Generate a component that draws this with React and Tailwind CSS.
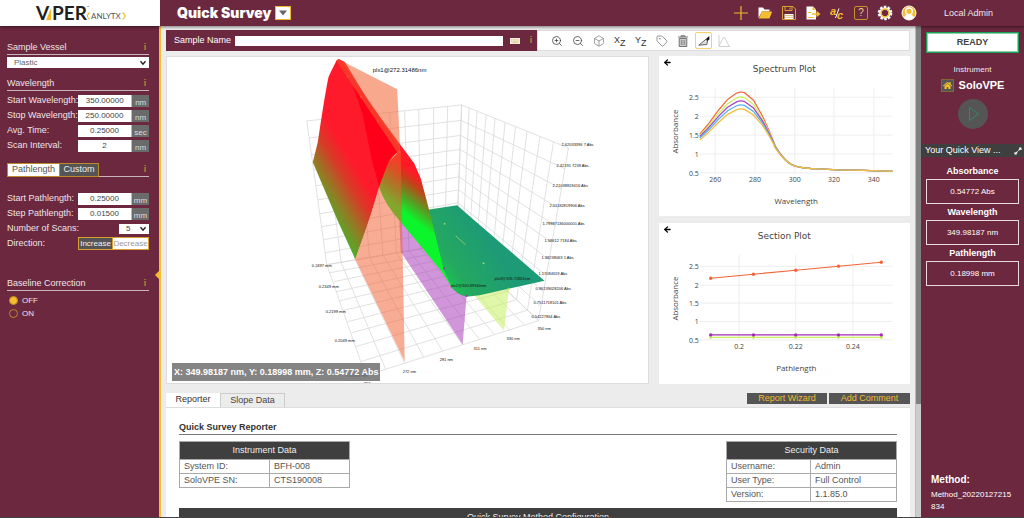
import React from "react";
import { FaHome, FaExpandAlt } from "react-icons/fa";
import { ZoomIn, ZoomOut, Box, Tag, ArrowLeft } from "lucide-react";

/* ---------- shared helpers ---------- */

const Info = () => (
  <button type="button" aria-label="Info" className="w-2 text-center text-[9px] leading-none font-bold text-[#b98a2c]">
    i
  </button>
);

function Section({ title, children }) {
  return (
    <div className="flex h-3.5 items-center justify-between border-b border-[#c9b3bd]">
      {title ? <h2 className="text-[9px] leading-none">{title}</h2> : children}
      <Info />
    </div>
  );
}

function Field({ id, label, value, unit }) {
  return (
    <div className="flex h-[15px] items-center justify-between">
      <label htmlFor={id} className="text-[9px] leading-none whitespace-nowrap">{label}</label>
      <div className="flex h-3 w-[71px] shrink-0">
        <input id={id} defaultValue={value} className="h-3 w-[54px] border-r border-[#f0b92d] bg-white text-center text-[8px] leading-none text-[#444]" />
        <span className="flex flex-1 items-end justify-center bg-[#6b6b6b] text-[8px] leading-[9px] text-[#ddd]">{unit}</span>
      </div>
    </div>
  );
}

const Chevron = () => (
  <svg viewBox="0 0 8 6" className="pointer-events-none absolute top-1/2 right-0.5 h-1.5 w-2 -translate-y-1/2">
    <path d="M1.5 1.2 4 4.2 6.5 1.2" fill="none" stroke="#222" strokeWidth="1.4" />
  </svg>
);

/* ---------- header ---------- */

const Logo = () => (
  <svg viewBox="0 0 160 26" className="h-[26px] w-40" role="img" aria-label="ViPER ANLYTX">
    <g fontFamily="Lato, sans-serif" fontWeight="700" fontSize="19" fill="#1f1f1f">
      <text x="36" y="20">V</text>
      <text x="52" y="20">PER</text>
    </g>
    <path d="M51.500 6V20.500H45.500Z" fill="#f5b921" stroke="#fff" strokeWidth=".7" />
    <text x="87" y="7.500" fontSize="3" fontFamily="Lato, sans-serif" fill="#333">™</text>
    <text x="91" y="18.500" fontSize="8" fontFamily="Lato, sans-serif" fill="#555">ANLYTX</text>
    <path d="M89.500 12.500Q87.500 14.500 87.300 16 87.500 17.500 89.500 19.500M122.500 12.500Q125 14.500 125.200 16 125 17.500 122.500 19.500" fill="none" stroke="#f5b921" strokeWidth="1.200" />
  </svg>
);

const SaveIcon = () => (
  <svg viewBox="0 0 16 16" className="h-4 w-4">
    <path d="M1.500 1.500H12L14.500 4V14.500H1.500Z" fill="none" stroke="#d9a030" />
    <path d="M4 1.500V5.500H11V1.500M9 2.500V4.500" fill="none" stroke="#d9a030" />
    <path d="M3.500 9H12.500V14H3.500Z" fill="#fff" />
    <path d="M4 10.500H12M4 12.300H12" stroke="#c98f2a" strokeWidth=".6" />
  </svg>
);

const GearIcon = () => (
  <svg viewBox="0 0 16 16" className="h-4 w-4">
    <circle cx="8" cy="8" r="6" fill="none" stroke="#fff" strokeWidth="2.600" strokeDasharray="2.400 1.370" />
    <circle cx="8" cy="8" r="4.500" fill="#6c283f" stroke="#fff" strokeWidth="2.600" />
    <circle cx="8" cy="8" r="3.900" fill="none" stroke="#f0b92d" strokeWidth="1.500" />
  </svg>
);

const UserIcon = () => (
  <svg viewBox="0 0 16 16" className="h-4 w-4">
    <circle cx="8" cy="8" r="7" fill="#f5be2e" stroke="#fff" strokeWidth="1" />
    <path d="M3 12.800Q4 9.600 8 9.600T13 12.800Q8 16.500 3 12.800Z" fill="#fff" />
    <circle cx="8" cy="6.300" r="3.300" fill="#f5be2e" stroke="#fff" strokeWidth="1.400" />
  </svg>
);

const QualityIcon = () => (
  <svg viewBox="0 0 16 16" className="h-4 w-4 font-[Liberation_Sans]" fontSize="11" fontWeight="700" fontStyle="italic" fill="#f5be2e">
    <text x="1" y="10">a</text>
    <path d="M10 3.500 6.500 13" stroke="#fff" strokeWidth="1" />
    <text x="8" y="14">c</text>
  </svg>
);

function Header() {
  const items = [
    ["New", <svg viewBox="0 0 16 16" className="h-4 w-4"><path d="M8 1V15M1 8H15" stroke="#f0b92d" strokeWidth="1.200" /></svg>],
    ["Open", (
      <svg viewBox="0 0 16 16" className="h-4 w-4">
        <path d="M1.500 13V2.500H6L7.500 4.500H12.500V6.500H5Z" fill="#fff" />
        <path d="M1.800 13.500 4.800 6.500H15.200L12.500 13.500Z" fill="#f5be2e" />
      </svg>
    )],
    ["Save", <SaveIcon />],
    ["Export", (
      <svg viewBox="0 0 16 16" className="h-4 w-4">
        <path d="M1.500 1.500H8L11 4.500V14.500H1.500Z" fill="#fff" />
        <path d="M7.500 1.500V5H11Z" fill="#f5be2e" />
        <path d="M3 7.500H6.500M3 12.500H9" stroke="#f5be2e" />
        <path d="M7 8.200H11.500V5.800L15.500 9 11.500 12.200V9.800H7Z" fill="#f5be2e" />
      </svg>
    )],
    ["Quality", <QualityIcon />],
    ["Help", <span className="flex h-3.5 w-3.5 items-center justify-center rounded-xs border border-[#c98f2a] text-[10px] leading-none text-[#f3cf85]">?</span>],
    ["Settings", <GearIcon />],
    ["User", <UserIcon />],
  ];
  return (
    <header className="relative z-10 flex h-[26px] shrink-0 bg-[#6c283f] text-white shadow-[0_1px_3px_rgba(0,0,0,.5)]">
      <div className="w-40 shrink-0 bg-white"><Logo /></div>
      <div className="flex flex-1 items-center justify-between pr-1 pl-[17px]">
        <div className="flex items-center gap-1">
          <h1 className="font-[Inter,sans-serif] text-[14px] leading-none font-black">Quick Survey</h1>
          <button type="button" aria-label="Choose application" className="flex h-3.5 w-4 items-center justify-center border border-[#f0b92d] bg-white">
            <svg viewBox="0 0 10 8" className="h-2 w-2.5"><path d="M1 1.500H9L5 6.500Z" fill="#666" /></svg>
          </button>
        </div>
        <div className="flex gap-2">
          {items.map(([name, icon]) => (
            <button key={name} type="button" aria-label={name} className="flex h-4 w-4 items-center justify-center">{icon}</button>
          ))}
        </div>
      </div>
      <div className="flex w-[103px] shrink-0 items-center justify-center text-[9px] leading-none text-[#f0e6ea]">
        <span className="pr-2">Local Admin</span>
      </div>
    </header>
  );
}

/* ---------- left sidebar ---------- */

function Sidebar() {
  return (
    <aside className="relative w-[161px] shrink-0 border-r-2 border-[#f5be2e] bg-[#6c283f] pt-[15px] pr-2.5 pl-[7px] text-[#eee4e8]">
      <Section title="Sample Vessel" />
      <div className="relative mt-0.5">
        <select aria-label="Sample Vessel" className="block h-[11px] w-full appearance-none bg-white pl-[7px] text-[8px] leading-[11px] text-[#666]">
          <option>Plastic</option>
        </select>
        <Chevron />
      </div>
      <div className="mt-[9px]"><Section title="Wavelength" /></div>
      <div className="mt-0.5">
        <Field id="startWl" label="Start Wavelength:" value="350.00000" unit="nm" />
        <Field id="stopWl" label="Stop Wavelength:" value="250.00000" unit="nm" />
        <Field id="avgTime" label="Avg. Time:" value="0.25000" unit="sec" />
        <Field id="scanInt" label="Scan Interval:" value="2" unit="nm" />
      </div>
      <div className="mt-2.5">
        <Section>
          <div className="flex h-3.5 border border-[#b98a2c] text-[9px] leading-none">
            <button type="button" className="w-[51px] bg-white text-[#555]">Pathlength</button>
            <button type="button" className="w-[39px] border-l border-[#b98a2c] bg-[#555] text-[#eee]">Custom</button>
          </div>
        </Section>
      </div>
      <div className="mt-3.5">
        <Field id="startPl" label="Start Pathlength:" value="0.25000" unit="mm" />
        <Field id="stepPl" label="Step Pathlength:" value="0.01500" unit="mm" />
        <div className="flex h-[15px] items-center justify-between">
          <label htmlFor="scans" className="text-[9px] leading-none">Number of Scans:</label>
          <div className="relative">
            <select id="scans" className="block h-2.5 w-[30px] appearance-none bg-white pl-[7px] text-[8px] leading-[10px] text-[#444]">
              <option>5</option>
            </select>
            <Chevron />
          </div>
        </div>
        <div className="flex h-[15px] items-center justify-between">
          <span className="text-[9px] leading-none">Direction:</span>
          <div className="flex h-[13px] w-[71px] border border-[#d9a030] text-[8px] leading-none">
            <button type="button" className="w-[34px] border-r border-[#d9a030] bg-[#555] text-[#f3f3f3]">Increase</button>
            <button type="button" className="flex-1 bg-white text-[#999]">Decrease</button>
          </div>
        </div>
      </div>
      <div className="mt-[26px]"><Section title="Baseline Correction" /></div>
      <fieldset className="mt-[3px] text-[8px] leading-none">
        {["OFF", "ON"].map((name) => (
          <label key={name} className="flex h-[13px] items-center gap-1 pl-0.5">
            <input
              type="radio"
              name="baseline"
              defaultChecked={name === "OFF"}
              className="h-[9px] w-[9px] appearance-none rounded-full border border-[#b98a2c] checked:bg-[#f5be2e]"
            />
            {name}
          </label>
        ))}
      </fieldset>
      <svg viewBox="0 0 4 8" className="absolute top-[245px] right-0 h-2 w-1"><path d="M4 0V8L0 4Z" fill="#f5be2e" /></svg>
    </aside>
  );
}

/* ---------- toolbar ---------- */

function Toolbar() {
  const plane = (a) => (
    <svg viewBox="0 0 14 14" className="h-3.5 w-3.5 font-[Liberation_Sans]" fill="#333">
      <text x="1" y="9" fontSize="9">{a}</text>
      <text x="7" y="12" fontSize="9">Z</text>
    </svg>
  );
  const tools = [
    ["Zoom in", <ZoomIn size={12} color="#444" strokeWidth={1.6} />],
    ["Zoom out", <ZoomOut size={12} color="#444" strokeWidth={1.6} />],
    ["3D view", <Box size={12} color="#888" strokeWidth={1.6} />],
    ["XZ view", plane("X")],
    ["YZ view", plane("Y")],
    ["Labels", <Tag size={12} color="#888" strokeWidth={1.8} />],
    ["Delete", (
      <svg viewBox="0 0 12 12" className="h-3 w-3">
        <path d="M1 2H11M4 2V.8H8V2M2.200 3.500H9.800V11.500H2.200Z" fill="#ccc" stroke="#666" strokeWidth=".9" />
        <path d="M4.300 5V10M6 5V10M7.700 5V10" stroke="#777" strokeWidth=".7" />
      </svg>
    )],
    ["Slice", (
      <svg viewBox="0 0 12 12" className="h-3 w-3">
        <path d="M.8 10.200 8 4.200 9.500 6 8.800 9.500Z" fill="#ddd" stroke="#555" strokeWidth=".9" />
        <path d="M8 4 11.200 1 11.500 4.200 9.500 6Z" fill="#111" />
      </svg>
    )],
    ["Peaks", (
      <svg viewBox="0 0 12 12" className="h-3 w-3">
        <path d="M1 0V11.500H12M1 11 5 3Q6 2 7 3L11 11" fill="none" stroke="#ccc" strokeWidth=".9" />
      </svg>
    )],
  ];
  return (
    <div className="flex h-[21px] shrink-0">
      <div className="flex flex-1 items-center bg-[#6c283f] pr-0.5 pl-2">
        <label htmlFor="sample" className="w-[61px] text-[9px] leading-none whitespace-nowrap text-white">Sample Name</label>
        <input id="sample" className="h-2.5 min-w-0 flex-1 bg-white px-1 text-[8px]" />
        <svg viewBox="0 0 10 6" className="mx-[7px] h-1.5 w-2.5">
          <path d="M0 0H10V6H0Z" fill="#f4efe0" />
          <path d="M1 1.700H9M1 3.200H9" stroke="#d5b66a" strokeWidth=".8" strokeDasharray="1 .6" />
          <path d="M2.500 4.700H7.500" stroke="#d5b66a" strokeWidth=".7" />
        </svg>
        <Info />
      </div>
      <div className="flex flex-1 items-center gap-[3px] border border-[#ddd] bg-white pl-2.5">
        {tools.map(([name, icon]) => (
          <button
            key={name}
            type="button"
            aria-label={name}
            className={
              name === "Slice"
                ? "flex h-[17px] w-[17px] items-center justify-center rounded-xs border border-[#f7cf6b]"
                : "flex h-[17px] w-[18px] items-center justify-center"
            }
          >
            {icon}
          </button>
        ))}
      </div>
    </div>
  );
}

/* ---------- 3D surface ---------- */

const lerp = (a, b, t) => a + (b - a) * t;
const topL = [307, 324, 341, 358, 374, 390, 405, 419, 434, 448, 462];
const leftY = [121, 138, 155, 170, 186, 200, 214, 227, 240, 253, 265];
const cornerY = [105, 120.5, 135.5, 149.5, 163.5, 177, 190, 203, 216, 229, 243];
const topR = [462, 469.500, 477.500, 486.500, 495.500, 505.500, 516, 527.500, 540.500, 554, 569];
const botR = [457, 463, 469, 476, 483, 491, 499, 508, 517, 528, 539];
const rightY = [148, 169, 189, 208, 226, 243, 260, 276, 292, 307, 321];
const edgeX = [327, 330, 334, 337, 340, 343, 348, 352, 356, 361, 366];
const edgeY = [265, 273, 282, 292, 301, 311, 322, 333, 347, 362, 376];
const frontX = [366, 386, 405, 424, 443, 463, 480, 495, 510, 525, 539];

function gridPath() {
  let d = "";
  for (let i = 0; i <= 10; i++) {
    const t = (topL[i] - 307) / 155;
    const bx = lerp(327, 457, t);
    const by = lerp(265, 243, t);
    d += `M${topL[i]} ${lerp(121, 105, t)}L${bx} ${by}`;
    const v = i / 10;
    d += `M${lerp(307, 327, (leftY[i] - 121) / 144)} ${leftY[i]}L${lerp(462, 457, v)} ${cornerY[i]}`;
    d += `L${lerp(569, 539, (rightY[i] - 148) / 173)} ${rightY[i]}`;
    const s = (topR[i] - 462) / 107;
    d += `M${topR[i]} ${lerp(105, 148, s)}L${botR[i]} ${lerp(243, 321, (botR[i] - 457) / 82)}`;
    d += `M${edgeX[i]} ${edgeY[i]}L${botR[i]} ${lerp(243, 321, (botR[i] - 457) / 82)}`;
    d += `M${bx} ${by}L${frontX[i]} ${lerp(376, 321, (frontX[i] - 366) / 173)}`;
  }
  return d;
}

const absLabels = [
  [562, 146, "2.62033396 7 Abs"], [557, 167, "2.42191 7239 Abs"], [553, 187, "2.21038819416 Abs"],
  [550, 207, "2.01182819906 Abs"], [543, 225, "1.79987136000001 Abs"], [545, 242, "1.58612 7184 Abs"],
  [542, 259, "1.38238063 1 Abs"], [539, 275, "1.17084619 Abs"], [536, 290, "0.96139028206 Abs"],
  [534, 304, "0.7511718101 Abs"], [532, 318, "0.54227864 Abs"],
];
const nmLabels = [
  [538, 330, "350 nm"], [507, 340, "330 nm"], [474, 350, "311 nm"], [440, 361, "291 nm"], [403, 373, "272 nm"],
  [364, 385, "252 nm"],
  [312, 267, "0.2497 mm"], [319, 288, "0.2349 mm"], [326, 313, "0.2199 mm"], [335, 342, "0.2049 mm"], [346, 377, "0.18996 mm"],
];

function Surface() {
  return (
    <div className="relative flex-[484_1_0%] border border-[#ddd] bg-white">
      <svg viewBox="167 57 482 326" className="block w-full" role="img" aria-label="Absorbance surface">
        <defs>
          <linearGradient id="slopeL" gradientUnits="userSpaceOnUse" x1="334" y1="225" x2="376" y2="199">
            <stop offset="0" stopColor="#4fae2a" />
            <stop offset=".35" stopColor="#947a24" />
            <stop offset=".7" stopColor="#d83a26" />
            <stop offset="1" stopColor="#ff1a2b" />
          </linearGradient>
          <linearGradient id="slopeR" gradientUnits="userSpaceOnUse" x1="406" y1="214" x2="429" y2="184">
            <stop offset="0" stopColor="#0cf52c" />
            <stop offset=".35" stopColor="#55a022" />
            <stop offset=".75" stopColor="#c64018" />
            <stop offset="1" stopColor="#ff1a26" />
          </linearGradient>
          <linearGradient id="flat" gradientUnits="userSpaceOnUse" x1="438" y1="275" x2="490" y2="240">
            <stop offset="0" stopColor="#17c94c" />
            <stop offset=".3" stopColor="#24a860" />
            <stop offset="1" stopColor="#1d9a76" />
          </linearGradient>
        </defs>
        <path d={gridPath()} fill="none" stroke="#d9d9d9" strokeWidth=".8" />
        <path d="M399 205 443 268 467 296 463 345 401 252Z" fill="#a32bb5" opacity=".5" />
        <path d="M475 296 509.500 289 504.500 331Z" fill="#c6ee62" opacity=".55" />
        <path d="M428 210 457.500 205.500 473.500 219.500 545 281 509 289 480 295.500 467 297Q460 296 453 289L440 266Z" fill="url(#flat)" />
        <path d="M338 60 356 82 379 115 399 142.500 414.500 163.500 421 178.500 426 197 432 220 438 245 444 270 453 289 443 273 420 245 400 221Q386 206 379 187L387 165 399 152Z" fill="url(#slopeR)" />
        <path d="M337 60 331.500 71Q328 77 327.500 83L324.500 100 321 122 318 142 313 162.500 337.500 220 355.500 259.500 366 230 372 212 379.500 187 387.500 166Q392 155 399.500 152L345 62 341 60Z" fill="url(#slopeL)" />
        <path d="M352.500 84 399 151.500Q389 158 379.500 187L372 160 363 115Z" fill="#ff001a" />
        <path d="M340 60 397.500 89.300 400.500 151Z" fill="#f06030" opacity=".55" />
        <path d="M399.500 151.500Q391 155 387.500 165L379.500 187 372 212 366 230 355.500 259.500 405 362 401 152Z" fill="#f06030" opacity=".52" />
        <path d="M339 61 399 151" stroke="#f5382a" strokeWidth="4" strokeLinecap="round" />
        <g fill="#f4552a">
          <circle cx="348" cy="76.500" r="1" /><circle cx="361.500" cy="97" r="1" />
          <circle cx="378.500" cy="121" r="1" /><circle cx="399.500" cy="152" r="1.200" />
        </g>
        <path d="M456 236 466 245" stroke="#9bc76a" strokeWidth=".9" />
        <g fill="#9be060"><circle cx="445" cy="224" r=".9" /><circle cx="484" cy="263.500" r="1" /><circle cx="509" cy="289" r="1" /></g>
        <g fill="#a32bb5"><circle cx="444.500" cy="268.500" r="1" /><circle cx="467" cy="296" r="1" /></g>
        <g fontFamily="Liberation Sans, sans-serif" fill="#111">
          <text x="373" y="72" fontSize="6">plx1@272.31486nm</text>
          <g fontSize="4">
            <text x="451" y="287">plx2@300.89340nm</text>
            <text x="495" y="280">plx3@326.71861nm</text>
            {absLabels.concat(nmLabels).map(([x, y, s]) => (
              <text key={y + s} x={x} y={y}>{s}</text>
            ))}
          </g>
        </g>
      </svg>
      <p className="absolute bottom-0.5 left-[5px] bg-[#6f6f6f]/85 px-0.5 text-[9px] leading-[18px] font-bold whitespace-nowrap text-white">
        X: 349.98187 nm, Y: 0.18998 mm, Z: 0.54772 Abs
      </p>
    </div>
  );
}

/* ---------- 2D plots ---------- */

function Plot({ title, axis, xTicks, yTicks, children }) {
  return (
    <div className="relative flex-1 bg-white">
      <button type="button" aria-label={"Back from " + title} className="absolute top-0.5 left-1 text-black">
        <ArrowLeft size={9} strokeWidth={3.4} />
      </button>
      <svg viewBox="0 0 252 160" className="block w-full" role="img" aria-label={title}>
        <text x="126" y="16" textAnchor="middle" fontSize="9" fontFamily="DejaVu Sans, sans-serif" fill="#444">{title}</text>
        {xTicks.map(([x]) => <path key={x} d={`M${x} 32V118`} stroke="#eee" />)}
        {yTicks.map(([y]) => <path key={y} d={`M41 ${y}H235`} stroke="#eee" />)}
        {children}
        <g fontFamily="Open Sans, sans-serif" fontSize="7" fill="#444">
          {xTicks.map(([x, s]) => <text key={s} x={x} y="127" textAnchor="middle">{s}</text>)}
          {yTicks.map(([y, s]) => <text key={s} x="40" y={y + 3} textAnchor="end">{s}</text>)}
          <text x="138" y="149" fontSize="8" textAnchor="middle">{axis}</text>
          <text transform="translate(19 76) rotate(-90)" fontSize="8" textAnchor="middle">Absorbance</text>
        </g>
      </svg>
    </div>
  );
}

const curves = [
  [78.5, 36, "#f26b43"],
  [80, 41, "#cdf06a"],
  [81, 45, "#a843c4"],
  [82.5, 49, "#5ab0ee"],
  [84.5, 53, "#f5be3a"],
];

const spectrum = (s, p) => {
  const y = (f) => lerp(s, p, f);
  return `M41 ${s}L49 ${y(.22)} 60 ${y(.57)} 69 ${y(.82)} 78 ${y(.97)}Q82 ${p - .5} 86 ${y(.98)}L95 ${y(.8)} 104 ${lerp(p, 90, .45)} Q113 ${lerp(p, 92, .78)} 117 ${lerp(p, 98, .88)}Q128 109 138 111Q146 113 160 113.500L180 114.500 206 115 235 116`;
};

const sectionX = [52, 95, 137.5, 180.5, 223.5];
const sectionSeries = [
  ["#c8ee5a", [115, 115, 115, 115, 115]],
  ["#a32bb5", [112.5, 112.5, 112.5, 112.5, 112.5]],
  ["#f2643a", [55.5, 51.5, 47.5, 43.5, 39.5]],
];

function Plots() {
  return (
    <div className="flex flex-[252_1_0%] flex-col gap-[7px]">
      <Plot
        title="Spectrum Plot"
        axis="Wavelength"
        xTicks={[[56.5, "260"], [96.5, "280"], [136.5, "300"], [176, "320"], [216, "340"]]}
        yTicks={[[41.5, "2.5"], [60.5, "2"], [79.5, "1.5"], [98.5, "1"], [117.5, "0.5"]]}
      >
        {curves.map(([s, p, c]) => <path key={c} d={spectrum(s, p)} fill="none" stroke={c} strokeWidth="1.300" />)}
      </Plot>
      <Plot
        title="Section Plot"
        axis="Pathlength"
        xTicks={[[80.5, "0.2"], [137.5, "0.22"], [195, "0.24"]]}
        yTicks={[[43.5, "2.5"], [62.5, "2"], [80.5, "1.5"], [99, "1"], [117.5, "0.5"]]}
      >
        {sectionSeries.map(([c, ys]) => (
          <g key={c} fill={c}>
            <path d={"M" + ys.map((y, i) => `${sectionX[i]} ${y}`).join("L")} fill="none" stroke={c} strokeWidth="1.100" />
            {ys.map((y, i) => <circle key={i} cx={sectionX[i]} cy={y} r="1.700" />)}
          </g>
        ))}
      </Plot>
    </div>
  );
}

/* ---------- reporter ---------- */

function DataTable({ title, rows, split }) {
  return (
    <table className="w-[171px] table-fixed border-collapse border border-[#aaa] text-[9px] leading-none text-[#555]">
      <colgroup>
        <col className={split} />
        <col />
      </colgroup>
      <thead>
        <tr><th colSpan={2} className="h-[18px] bg-[#3f3f3f] font-normal text-[#eee]">{title}</th></tr>
      </thead>
      <tbody>
        {rows.map(([k, v]) => (
          <tr key={k} className="h-[14px]">
            <td className="border border-[#aaa] px-1">{k}</td>
            <td className="border border-[#aaa] px-1">{v}</td>
          </tr>
        ))}
      </tbody>
    </table>
  );
}

function Reporter() {
  return (
    <section className="mt-[9px] flex shrink-0 grow flex-col">
      <div className="flex items-start justify-between border-b border-[#ddd]">
        <div className="flex text-[9px] leading-none">
          <button type="button" className="h-3.5 w-[54px] bg-white text-[#333]">Reporter</button>
          <button type="button" className="h-3.5 w-[65px] border border-b-0 border-[#ccc] text-[#444]">Slope Data</button>
        </div>
        <div className="flex gap-0.5 text-[9px] leading-none text-[#f0b92d]">
          <button type="button" className="h-[11px] w-20 bg-[#555]">Report Wizard</button>
          <button type="button" className="h-[11px] w-[81px] bg-[#555]">Add Comment</button>
        </div>
      </div>
      <div className="flex-1 bg-white px-[13px] pt-3.5">
        <h2 className="h-[13px] border-b border-[#777] text-[9px] leading-[11px] font-bold text-[#333]">Quick Survey Reporter</h2>
        <div className="mt-1.5 flex items-start justify-between">
          <DataTable title="Instrument Data" split="w-[90px]" rows={[["System ID:", "BFH-008"], ["SoloVPE SN:", "CTS190008"]]} />
          <DataTable title="Security Data" split="w-[84px]" rows={[["Username:", "Admin"], ["User Type:", "Full Control"], ["Version:", "1.1.85.0"]]} />
        </div>
        <h3 className="mt-1.5 h-[18px] bg-[#3f3f3f] text-center text-[9px] leading-[18px] text-[#eee]">Quick Survey Method Configuration</h3>
      </div>
    </section>
  );
}

/* ---------- right panel ---------- */

function Status() {
  const values = [["Absorbance", "0.54772 Abs"], ["Wavelength", "349.98187 nm"], ["Pathlength", "0.18998 mm"]];
  return (
    <aside className="flex w-[103px] shrink-0 flex-col bg-[#6c283f] text-white">
      <div className="mx-[5px] mt-1.5 flex h-[21px] shrink-0 items-center justify-center border border-[#18a058] bg-white text-[9px] leading-none font-bold text-[#444] outline-1 -outline-offset-2 outline-[#8fd0ac]">READY</div>
      <p className="mt-3 text-center text-[8px] leading-[10px] text-[#f0e6ea]">Instrument</p>
      <div className="mt-1 flex items-center justify-center gap-[5px]">
        <button type="button" aria-label="Home" className="flex h-[13px] w-[13px] items-center justify-center border border-[#7d6a34] bg-[#555] text-[#f5be2e]">
          <FaHome size={9} />
        </button>
        <strong className="text-[11px] leading-none">SoloVPE</strong>
      </div>
      <button type="button" aria-label="Start" className="mx-auto mt-[7px] flex h-[30px] w-[30px] shrink-0 items-center justify-center rounded-full bg-[#555]">
        <svg viewBox="0 0 12 16" className="ml-0.5 h-4 w-3"><path d="M1.500 1.500 10.500 8 1.500 14.500Z" fill="none" stroke="#2f8a5c" /></svg>
      </button>
      <div className="mt-[15px] flex h-[13px] shrink-0 items-center justify-between bg-[#3f3f3f] pr-0.5 pl-1 text-[9px] leading-none">
        <span>Your Quick View ...</span>
        <button type="button" aria-label="Expand"><FaExpandAlt size={8} /></button>
      </div>
      <dl className="mx-[5px] mt-2.5 text-center">
        {values.map(([k, v]) => (
          <div key={k}>
            <dt className="h-3 text-[9px] leading-[9px] font-bold">{k}</dt>
            <dd className="mb-1 h-[25px] border border-[#e6dade] text-[8px] leading-[23px]">{v}</dd>
          </div>
        ))}
      </dl>
      <div className="mt-auto px-2.5 pb-1">
        <h2 className="text-[10px] leading-[14px] font-bold">Method:</h2>
        <p className="pt-0.5 text-[8px] leading-3 break-all">Method_20220127215834</p>
      </div>
    </aside>
  );
}

export default function App() {
  return (
    <div className="flex h-screen flex-col overflow-hidden border-b border-[#444] bg-[#ececec] font-['Liberation_Sans',Arial,sans-serif]">
      <Header />
      <div className="flex min-h-0 flex-1">
        <Sidebar />
        <main className="flex min-w-0 flex-1 flex-col overflow-hidden px-[5px] pt-1">
          <Toolbar />
          <div className="mt-[5px] flex shrink-0 gap-2.5">
            <Surface />
            <Plots />
          </div>
          <Reporter />
        </main>
        <div className="w-1.5 shrink-0 border-l border-[#bbb] bg-[#ccc]"><div className="h-[77%] bg-[#808080]" /></div>
        <Status />
      </div>
    </div>
  );
}
